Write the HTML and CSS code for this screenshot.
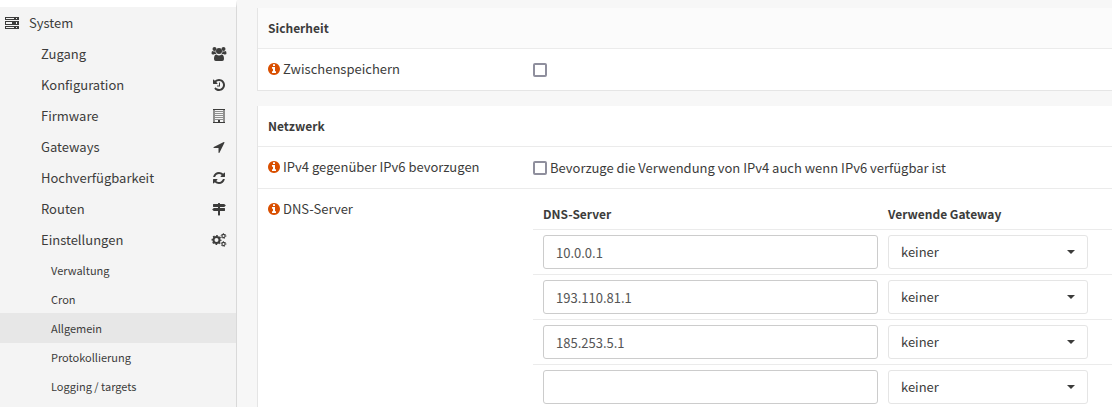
FILE: index.html
```html
<!DOCTYPE html>
<html lang="de">
<head>
<meta charset="utf-8">
<title>System: Einstellungen: Allgemein</title>
<link rel="stylesheet" href="styles.css">
</head>
<body>
<svg class="defs" aria-hidden="true">
  <symbol id="info" viewBox="0 0 1792 1792"><path d="M1152 1376v-160q0-14-9-23t-23-9h-96v-512q0-14-9-23t-23-9h-320q-14 0-23 9t-9 23v160q0 14 9 23t23 9h96v320h-96q-14 0-23 9t-9 23v160q0 14 9 23t23 9h448q14 0 23-9t9-23zm-128-896v-160q0-14-9-23t-23-9h-192q-14 0-23 9t-9 23v160q0 14 9 23t23 9h192q14 0 23-9t9-23zm640 416q0 209-103 385.5t-279.5 279.5-385.5 103-385.5-103-279.5-279.5-103-385.5 103-385.5 279.5-279.5 385.5-103 385.5 103 279.5 279.5 103 385.5z"/></symbol>
</svg>
<div class="page">
  <nav class="sidebar">
    <a class="item item-root" href="#">
      <svg class="icon" viewBox="0 0 14 14" aria-hidden="true"><path fill-rule="evenodd" d="M0 1h14v3H0zM1 2v1h8V2zM11 2v1h1V2zM0 5h14v4H0zM1 6v2h6V6zM11 6v2h1V6zM0 10h14v3H0zM1 11v1h8v-1zM11 11v1h1v-1z"/></svg>
      <span>System</span>
    </a>
    <a class="item" href="#"><span>Zugang</span>
      <svg class="icon icon-menu" viewBox="0 0 15 14" aria-hidden="true"><circle cx="3" cy="2" r="2"/><circle cx="12" cy="2" r="2"/><circle cx="7.500" cy="4" r="3"/><path d="M1.300 4Q3 5 4 4.100Q3.800 6 5 7H3.200Q2.600 7 2.200 7.500H1.500Q0 7.500 0 6.300Q0 4 1.300 4zM13.700 4Q12 5 11 4.100Q11.200 6 10 7h1.800Q12.400 7 12.800 7.500h.7Q15 7.500 15 6.300Q15 4 13.700 4zM4.900 7.500Q7.500 9.500 10.100 7.500Q12.500 7.500 12.500 12Q12.500 14 10.700 14H4.300Q2.500 14 2.500 12Q2.500 7.500 4.900 7.500z"/></svg>
    </a>
    <a class="item" href="#"><span>Konfiguration</span>
      <svg class="icon icon-menu" viewBox="0 0 1792 1792" aria-hidden="true"><path d="M1664 896q0 156-61 298t-164 245-245 164-298 61q-172 0-327-72.500t-264-204.500q-7-10-6.500-22.500t8.500-20.500l137-138q10-9 25-9 16 2 23 12 73 95 179 147t225 52q104 0 198.500-40.500t163.500-109.500 109.500-163.500 40.500-198.500-40.500-198.500-109.500-163.500-163.500-109.500-198.500-40.500q-98 0-188 35.500t-160 101.500l137 138q31 30 14 69-17 40-59 40h-448q-26 0-45-19t-19-45v-448q0-42 40-59 39-17 69 14l130 129q107-101 244.500-156.500t284.500-55.500q156 0 298 61t245 164 164 245 61 298zm-640-288v448q0 14-9 23t-23 9h-320q-14 0-23-9t-9-23v-64q0-14 9-23t23-9h224v-352q0-14 9-23t23-9h64q14 0 23 9t9 23z"/></svg>
    </a>
    <a class="item" href="#"><span>Firmware</span>
      <svg class="icon icon-menu" viewBox="0 0 14 14" aria-hidden="true"><path d="M1 0h12v1H1zM1 13h12v1H1zM6 11h2v2H6z"/><path opacity=".55" d="M1 1h2v12H1zM11 1h2v12h-2zM3 2h8v1H3zM3 4h8v1H3zM3 6h8v1H3zM3 8h8v1H3zM3 10h8v1H3z"/></svg>
    </a>
    <a class="item" href="#"><span>Gateways</span>
      <svg class="icon icon-menu" viewBox="0 0 1792 1792" aria-hidden="true"><path d="M1593 349l-640 1280q-17 35-57 35-5 0-15-2-22-5-35.500-22.500t-13.500-39.500v-576h-576q-22 0-39.500-13.500t-22.500-35.500 4-42 29-30l1280-640q13-7 29-7 27 0 45 19 15 14 18.500 34.500t-6.500 39.500z"/></svg>
    </a>
    <a class="item" href="#"><span>Hochverfügbarkeit</span>
      <svg class="icon icon-menu" viewBox="0 0 1792 1792" aria-hidden="true"><path d="M1639 1056q0 5-1 7-64 268-268 434.500t-478 166.500q-146 0-282.500-55t-243.500-157l-129 129q-19 19-45 19t-45-19-19-45v-448q0-26 19-45t45-19h448q26 0 45 19t19 45-19 45l-137 137q71 66 161 102t187 36q134 0 250-65t186-179q11-17 53-117 8-23 30-23h192q13 0 22.500 9.500t9.500 22.500zm25-800v448q0 26-19 45t-45 19h-448q-26 0-45-19t-19-45 19-45l138-138q-148-137-349-137-134 0-250 65t-186 179q-11 17-53 117-8 23-30 23h-199q-13 0-22.500-9.500t-9.500-22.500v-7q65-268 270-434.500t480-166.500q146 0 284 55.500t245 156.500l130-129q19-19 45-19t45 19 19 45z"/></svg>
    </a>
    <a class="item" href="#"><span>Routen</span>
      <svg class="icon icon-menu" viewBox="0 0 1792 1792" aria-hidden="true"><path d="M1745 425q10 10 10 23t-10 23l-141 141q-28 28-68 28h-1344q-26 0-45-19t-19-45v-256q0-26 19-45t45-19h576v-64q0-26 19-45t45-19h128q26 0 45 19t19 45v64h512q40 0 68 28zm-977 727h256v512q0 26-19 45t-45 19h-128q-26 0-45-19t-19-45v-512zm832-384q26 0 45 19t19 45v256q0 26-19 45t-45 19h-1344q-40 0-68-28l-141-141q-10-10-10-23t10-23l141-141q28-28 68-28h512v-128h256v128h576z"/></svg>
    </a>
    <a class="item" href="#"><span>Einstellungen</span>
      <svg class="icon icon-menu" viewBox="0 0 15 14" aria-hidden="true"><g fill="none" stroke="currentColor"><circle cx="5" cy="7" r="3" stroke-width="2"/><circle cx="5" cy="7" r="4.300" stroke-width="1.400" stroke-dasharray="1.700 1.677" stroke-dashoffset=".85"/><circle cx="12" cy="3" r="1.600" stroke-width="1.100"/><circle cx="12" cy="3" r="2.400" stroke-width="1" stroke-dasharray="1.100 1.413" stroke-dashoffset=".5"/><circle cx="12" cy="11" r="1.600" stroke-width="1.100"/><circle cx="12" cy="11" r="2.400" stroke-width="1" stroke-dasharray="1.100 1.413" stroke-dashoffset=".5"/></g></svg>
    </a>
    <a class="item item-sub" href="#">Verwaltung</a>
    <a class="item item-sub" href="#">Cron</a>
    <a class="item item-sub active" href="#" aria-current="page">Allgemein</a>
    <a class="item item-sub" href="#">Protokollierung</a>
    <a class="item item-sub" href="#">Logging / targets</a>
  </nav>
  <main class="content">
    <section class="panel panel-tinted">
      <h2 class="panel-title">Sicherheit</h2>
      <div class="setting">
        <label class="setting-name" for="cache"><svg class="icon info"><use href="#info"/></svg>Zwischenspeichern</label>
        <div class="setting-value"><input class="check" type="checkbox" id="cache"></div>
      </div>
    </section>
    <section class="panel">
      <h2 class="panel-title">Netzwerk</h2>
      <div class="setting">
        <div class="setting-name"><svg class="icon info"><use href="#info"/></svg>IPv4 gegenüber IPv6 bevorzugen</div>
        <div class="setting-value"><input class="check" type="checkbox" id="prefer"><label for="prefer">Bevorzuge die Verwendung von IPv4 auch wenn IPv6 verfügbar ist</label></div>
      </div>
      <div class="setting">
        <div class="setting-name"><svg class="icon info"><use href="#info"/></svg>DNS-Server</div>
        <table class="dns">
          <thead><tr><th class="col-server">DNS-Server</th><th>Verwende Gateway</th></tr></thead>
          <tbody>
            <tr><td><input class="field" type="text" aria-label="DNS-Server 1" value="10.0.0.1"></td><td><div class="picker"><select class="select" aria-label="Gateway 1"><option>keiner</option></select></div></td></tr>
            <tr><td><input class="field" type="text" aria-label="DNS-Server 2" value="193.110.81.1"></td><td><div class="picker"><select class="select" aria-label="Gateway 2"><option>keiner</option></select></div></td></tr>
            <tr><td><input class="field" type="text" aria-label="DNS-Server 3" value="185.253.5.1"></td><td><div class="picker"><select class="select" aria-label="Gateway 3"><option>keiner</option></select></div></td></tr>
            <tr><td><input class="field" type="text" aria-label="DNS-Server 4" value=""></td><td><div class="picker"><select class="select" aria-label="Gateway 4"><option>keiner</option></select></div></td></tr>
          </tbody>
        </table>
      </div>
    </section>
  </main>
</div>
</body>
</html>
```
FILE: styles.css
```css
* { box-sizing: border-box; }

body {
  margin: 0;
  background: #f7f7f7;
  color: #3c3c3b;
  font: 13px/20px "Noto Sans CJK SC", "Noto Sans", sans-serif;
}

.defs { display: none; }

.page {
  display: grid;
  grid-template-columns: 237px minmax(0, 1fr);
  height: 100vh;
  overflow: hidden;
}

.icon {
  flex: none;
  width: 14px;
  height: 14px;
  fill: currentColor;
}
.icon-menu { width: 18px; }

.sidebar {
  display: flex;
  flex-direction: column;
  border-top: 7px solid #fff;
  border-right: 1px solid #d9d9d9;
  background: #f4f4f4;
}

.item {
  display: flex;
  align-items: center;
  justify-content: space-between;
  height: 32px;
  margin-bottom: -1px;
  padding: 0 8px 0 41px;
  color: inherit;
  text-decoration: none;
}
.item-root {
  justify-content: flex-start;
  gap: 10px;
  padding-left: 5px;
}
.item-sub {
  height: 30px;
  padding-left: 51px;
  font-size: 11px;
}
.active { background: #e7e7e7; }

.content {
  display: flex;
  flex-direction: column;
  gap: 15px;
  padding: 8px 0 0 20px;
}

.panel {
  flex: none;
  border-left: 1px solid #e5e5e5;
  border-bottom: 1px solid #e5e5e5;
  background: #fff;
}

.panel-title {
  margin: 0;
  padding: 10px;
  font-size: 12px;
  font-weight: 700;
}
.panel-tinted .panel-title { background: #fbfbfb; }

.setting {
  display: grid;
  grid-template-columns: 275px minmax(0, 1fr);
  align-items: start;
  border-top: 1px solid #ebebeb;
}

.setting-name {
  display: flex;
  align-items: center;
  gap: 2px;
  padding: 10px 0 11px 9px;
}
.info { color: #d94f00; }

.setting-value {
  display: flex;
  align-items: center;
  gap: 3px;
  min-height: 31px;
  padding-top: 11px;
}

.check {
  appearance: none;
  width: 14px;
  height: 14px;
  margin: 0;
  border: 2px solid #8f8f9d;
  border-radius: 2px;
  background: #fff;
}

.dns {
  width: 100%;
  margin-top: 10px;
  border-collapse: separate;
  border-spacing: 0;
}
.dns th {
  padding: 5px 0 5px 10px;
  font-size: 12px;
  text-align: left;
}
.dns td {
  padding: 5px 0 5px 10px;
  border-top: 1px solid #ebebeb;
}
.col-server { width: 345px; }

.field,
.select {
  display: block;
  width: 100%;
  height: 34px;
  padding: 6px 12px;
  border: 1px solid #ccc;
  border-radius: 3px;
  background: #fff;
  color: #555;
  font: inherit;
}

.select {
  appearance: none;
  border-color: #e5e5e5;
  color: #3c3c3b;
}

.picker {
  position: relative;
  width: 200px;
}
.picker::after {
  content: "";
  position: absolute;
  top: 15px;
  right: 13px;
  border: 4px solid transparent;
  border-top-color: #3c3c3b;
  border-bottom: 0;
  pointer-events: none;
}
```
